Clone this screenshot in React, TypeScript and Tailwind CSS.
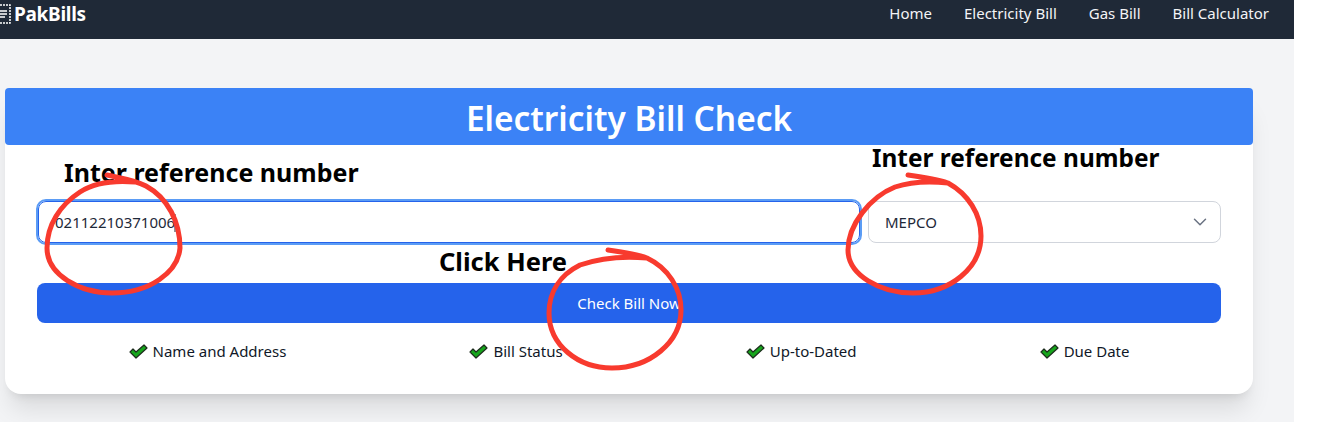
import { useState } from "react";
import { ChevronDown } from "lucide-react";

const navLinks = ["Home", "Electricity Bill", "Gas Bill", "Bill Calculator"];
const features = ["Name and Address", "Bill Status", "Up-to-Dated", "Due Date"];

function Check() {
  return (
    <svg width="19" height="15" viewBox="0 0 19 15" className="shrink-0">
      <path d="M1 8 L4 5 L7 8 L15 1 L18 4 L7 14 Z" fill="#16a51c" stroke="#1c2b1c" strokeWidth="1.2" strokeLinejoin="round" />
    </svg>
  );
}

// hand drawn circles from the annotated screenshot
function Scribbles() {
  const stroke = { fill: "none", stroke: "#f83a2e", strokeWidth: 5, strokeLinecap: "round" as const, strokeLinejoin: "round" as const };
  return (
    <svg width="1318" height="422" viewBox="0 0 1318 422" className="absolute left-0 top-0 pointer-events-none">
      <path d="M175 214 V232" stroke="#1f2937" strokeWidth="1" />
      <path {...stroke} d="M107 175 C120 178 135 180 146 186 C168 198 180 222 180 248 C178 272 150 293 112 293 C80 293 47 275 47 248 C47 225 60 205 80 192 C92 184 110 180 135 182" />
      <path {...stroke} d="M908 175 C922 177 936 179 948 183 C968 194 981 214 981 236 C981 268 950 293 913 293 C880 293 848 275 848 250 C848 225 870 197 895 187 C910 182 930 181 948 183" />
      <path {...stroke} d="M608 250 C622 252 636 254 647 258 C668 268 681 288 681 310 C681 342 650 368 612 368 C578 368 549 345 549 313 C549 292 560 275 580 265 C600 258 625 256 647 258" />
    </svg>
  );
}

export default function App() {
  const [refNo, setRefNo] = useState("02112210371006");

  return (
    <div className="relative w-[1318px] h-[422px] overflow-hidden bg-white font-['Noto_Sans','Open_Sans',sans-serif]">
      <div className="w-[1294px] h-full bg-[#f3f4f6]">
        <nav className="h-[39px] bg-[#1f2937] text-white flex items-start justify-between pr-[25px]">
          <div className="flex items-center gap-[3px] mt-[4px]">
            <svg width="11" height="20" viewBox="0 0 11 20" className="shrink-0">
              <path d="M0 1 H10 V19 H0" fill="none" stroke="#fff" strokeWidth="1.5" strokeDasharray="2 1" />
              <path d="M0 7 H7 M0 10 H7 M0 13 H5" stroke="#fff" strokeWidth="1.5" />
            </svg>
            <span className="text-[19px] leading-5 font-bold tracking-[-0.3px]">PakBills</span>
          </div>
          <ul className="flex items-center gap-8 mt-[2px]">
            {navLinks.map((link) => (
              <li key={link} className="text-[15px] leading-[22px] text-gray-100">
                {link}
              </li>
            ))}
          </ul>
        </nav>

        <main className="pt-[49px] pl-[5px]">
          <section className="w-[1248px] h-[306px] bg-white rounded-2xl shadow-xl">
            <h1 className="h-[57px] pt-[3px] bg-[#3b82f6] rounded-[4px] flex items-center justify-center text-white text-[33.4px] font-semibold">
              Electricity Bill Check
            </h1>
            <div className="px-8 pt-[56px]">
              <div className="flex gap-[8px]">
                <input
                  value={refNo}
                  onChange={(e) => setRefNo(e.target.value)}
                  className="ml-px w-[822px] h-[42px] rounded-lg border border-[#2563eb] outline-2 outline-[#5b9cf5] pl-[16px] text-[15px] text-gray-800"
                />
                <div className="flex-1 h-[42px] rounded-lg border border-gray-300 flex items-center justify-between pl-4 pr-[9px] text-[15px] text-gray-800">
                  <span>MEPCO</span>
                  <ChevronDown size={22} strokeWidth={1.6} className="text-gray-500" />
                </div>
              </div>
              <button className="mt-[40px] w-full h-10 rounded-lg bg-[#2563eb] text-white text-[15px]">
                Check Bill Now
              </button>
              <ul className="mt-[18px] flex justify-around">
                {features.map((f) => (
                  <li key={f} className="flex items-center gap-[5px] text-[15px] leading-5 text-gray-900">
                    <Check />
                    {f}
                  </li>
                ))}
              </ul>
            </div>
          </section>
        </main>
      </div>

      <span className="absolute left-[64px] top-[154px] text-[25px] leading-9 font-bold text-black">Inter reference number</span>
      <span className="absolute left-[872px] top-[140px] text-[24.4px] leading-9 font-bold text-black">Inter reference number</span>
      <span className="absolute left-[439px] top-[243px] text-[25.5px] leading-9 font-bold text-black">Click Here</span>
      <Scribbles />
    </div>
  );
}
